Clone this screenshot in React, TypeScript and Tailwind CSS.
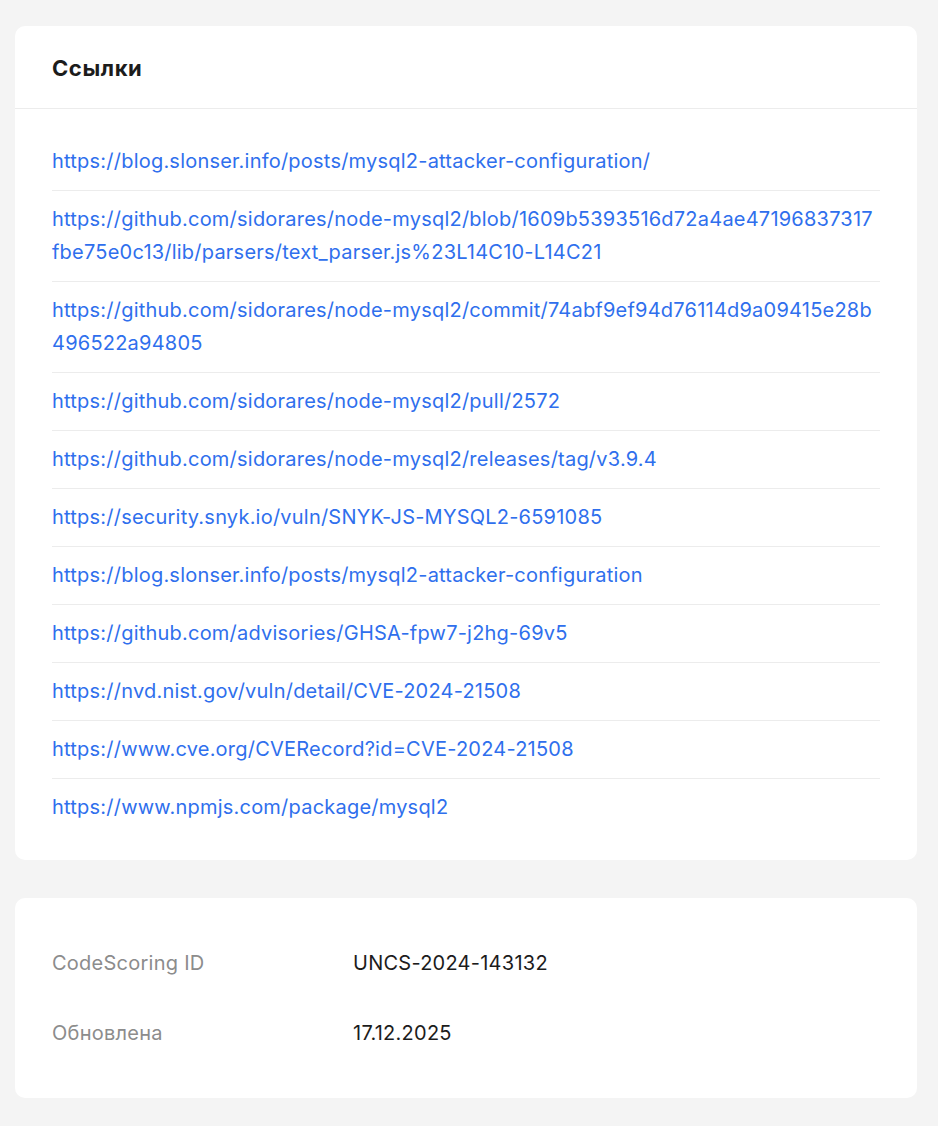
const links = [
  "https://blog.slonser.info/posts/mysql2-attacker-configuration/",
  "https://github.com/sidorares/node-mysql2/blob/1609b5393516d72a4ae47196837317fbe75e0c13/lib/parsers/text_parser.js%23L14C10-L14C21",
  "https://github.com/sidorares/node-mysql2/commit/74abf9ef94d76114d9a09415e28b496522a94805",
  "https://github.com/sidorares/node-mysql2/pull/2572",
  "https://github.com/sidorares/node-mysql2/releases/tag/v3.9.4",
  "https://security.snyk.io/vuln/SNYK-JS-MYSQL2-6591085",
  "https://blog.slonser.info/posts/mysql2-attacker-configuration",
  "https://github.com/advisories/GHSA-fpw7-j2hg-69v5",
  "https://nvd.nist.gov/vuln/detail/CVE-2024-21508",
  "https://www.cve.org/CVERecord?id=CVE-2024-21508",
  "https://www.npmjs.com/package/mysql2",
];

const meta = [
  ["CodeScoring ID", "UNCS-2024-143132"],
  ["Обновлена", "17.12.2025"],
];

export default function App() {
  return (
    <div className="min-h-[1126px] bg-[#f4f4f4] pl-[15px] pr-[21px] pt-[26px] pb-[27px] font-['Inter',sans-serif]">
      <section className="rounded-[10px] bg-white">
        <div className="border-b border-[#ececec] px-[37px] pt-[28px] pb-[26px]">
          <h2 className="text-[22px] font-bold leading-[28px] tracking-[0.6px] text-[#1c1c1c]">Ссылки</h2>
        </div>
        <ul className="px-[37px] py-[24px]">
          {links.map((href, i) => (
            <li key={i} className={`py-3 ${i < links.length - 1 ? "border-b border-[#ececec]" : ""}`}>
              <a href={href} className="block break-all text-[20px] leading-[33px] tracking-[0.22px] text-[#2f6fed]">{href}</a>
            </li>
          ))}
        </ul>
      </section>

      <section className="mt-[38px] rounded-[10px] bg-white px-[37px] py-[30px]">
        {meta.map(([label, value]) => (
          <div key={label} className="flex h-[70px] items-center text-[20px] leading-[28px] tracking-[0.25px]">
            <span className="w-[301px] text-[#8c8c8c]">{label}</span>
            <span className="text-[#1c1c1c]">{value}</span>
          </div>
        ))}
      </section>
    </div>
  );
}
